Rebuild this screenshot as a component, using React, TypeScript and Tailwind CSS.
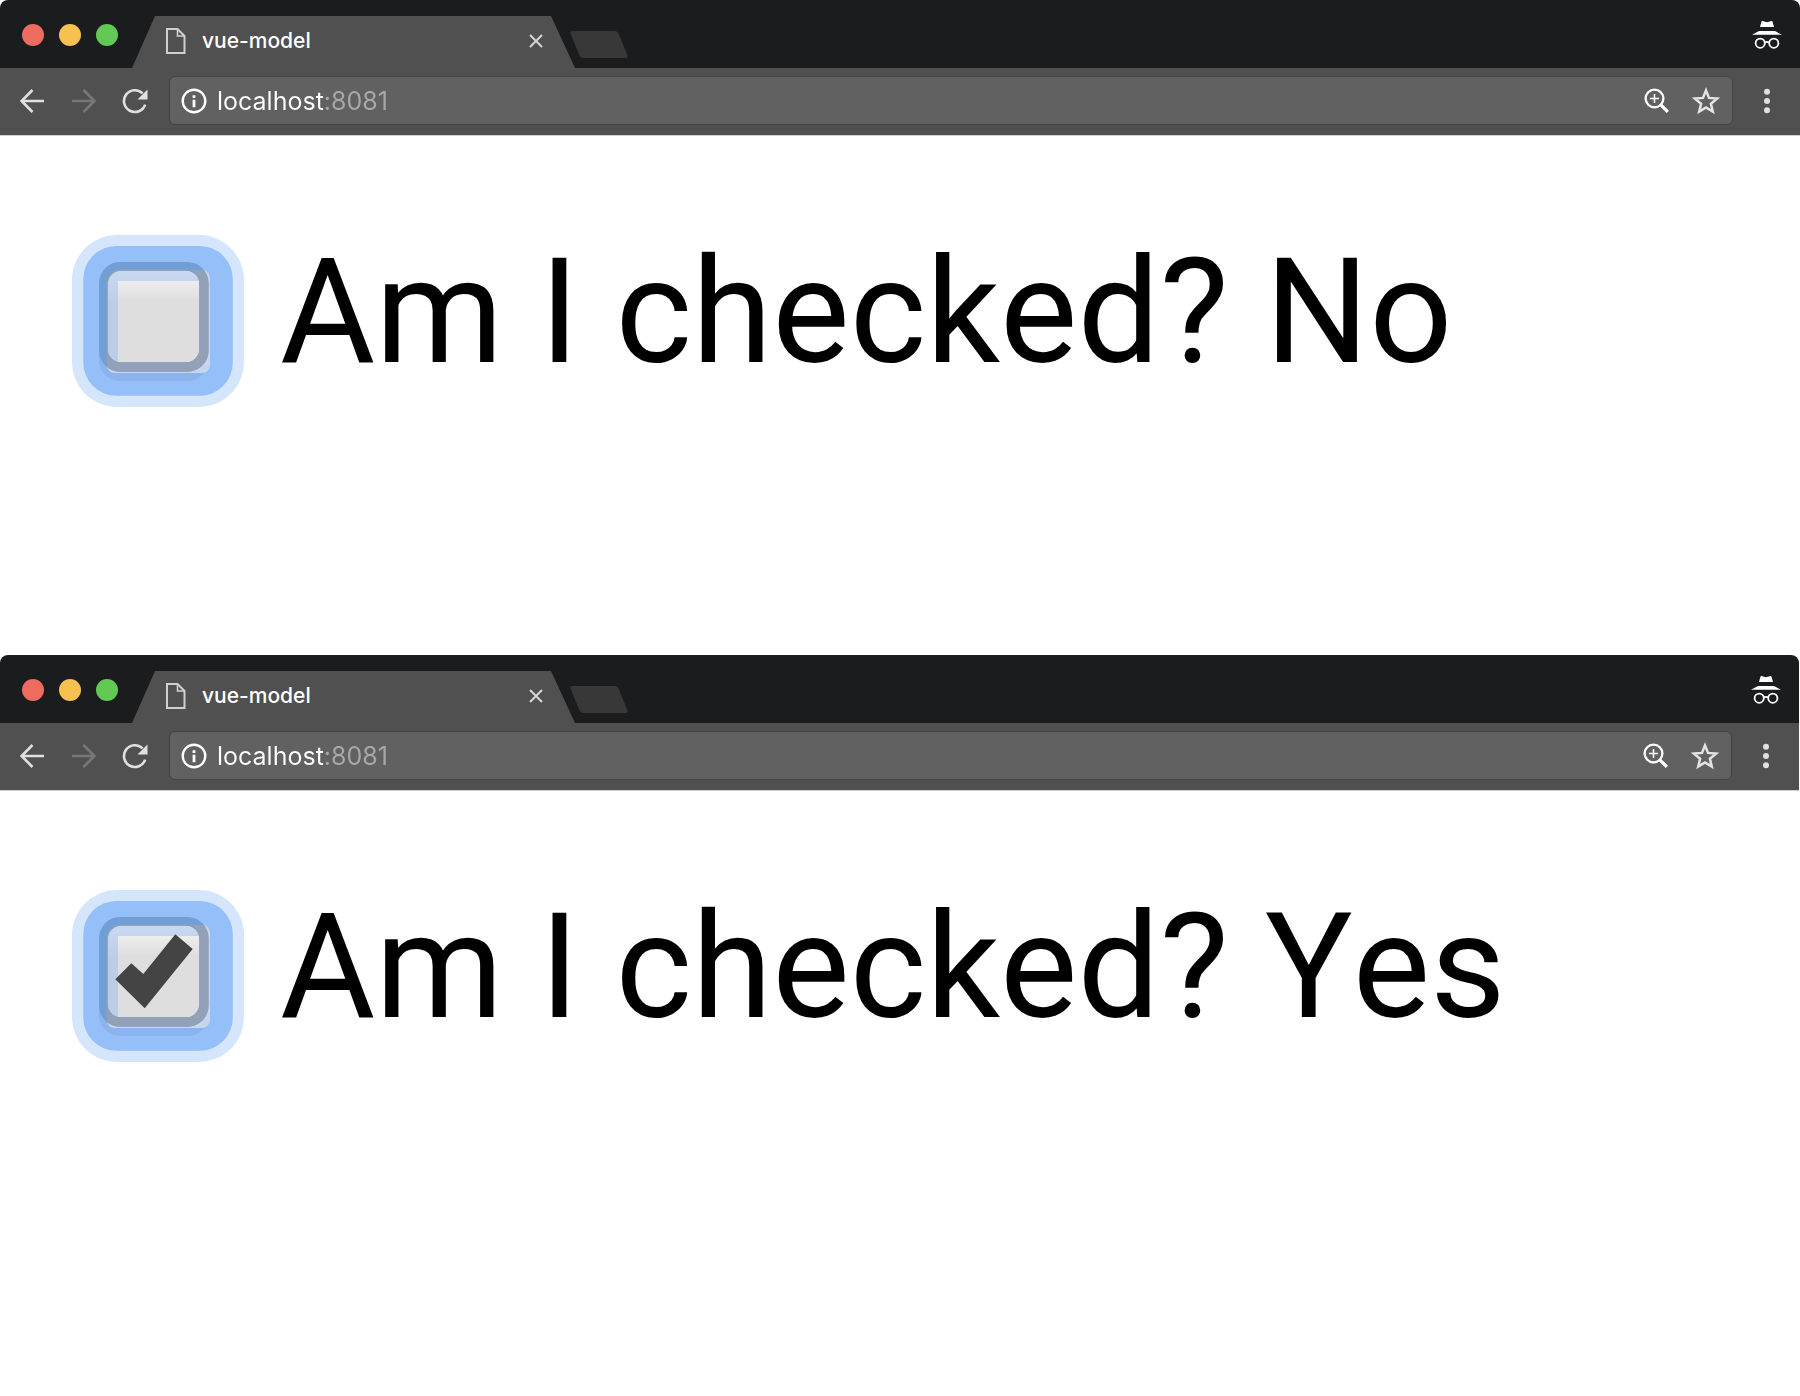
import { useId, useState } from "react";

function FileIcon() {
  return (
    <svg width="20" height="26" viewBox="0 0 20 26" fill="none" stroke="#d0d0d0" strokeWidth="2" aria-hidden="true">
      <path d="M1 1h10.5l7 7V25H1z" />
      <path d="M11.5 1v7h7" strokeWidth="1.6" />
    </svg>
  );
}

function CloseIcon() {
  return (
    <svg width="14" height="14" viewBox="0 0 14 14" stroke="#d6d6d6" strokeWidth="2" aria-hidden="true">
      <path d="M1 1l12 12M13 1L1 13" />
    </svg>
  );
}

function IncognitoIcon() {
  return (
    <svg width="30" height="28" viewBox="0 0 30 28" fill="#fff" role="img" aria-label="Incognito">
      <path d="M9.4 0.8Q9.6 0 10.4 0.1L15 1.2L19.6 0.1Q20.4 0 20.6 0.8L22 6H8z" />
      <path d="M7 10H23L30 13.8H0z" />
      <g fill="none" stroke="#fff" strokeWidth="1.8">
        <circle cx="8.2" cy="22.2" r="4.6" />
        <circle cx="21.8" cy="22.2" r="4.6" />
        <path d="M12.8 21.4Q15 20.4 17.2 21.4" />
      </g>
    </svg>
  );
}

function BackIcon() {
  return (
    <svg width="24" height="24" viewBox="0 0 24 24" fill="none" stroke="currentColor" strokeWidth="2.6" aria-hidden="true">
      <path d="M12.5 1L1.6 12L12.5 23M1.6 12H24" />
    </svg>
  );
}

function ReloadIcon() {
  return (
    <svg width="26" height="26" viewBox="0 0 26 26" fill="none" aria-hidden="true">
      <path d="M20.6 5.4A10.9 10.9 0 1 0 23.2 16.6" stroke="#e0e0e0" strokeWidth="2.6" />
      <path d="M25.5 1.5V11.5H15.5z" fill="#e0e0e0" />
    </svg>
  );
}

function InfoIcon() {
  return (
    <svg width="26" height="26" viewBox="0 0 26 26" fill="none" aria-hidden="true">
      <circle cx="13" cy="13" r="11.3" stroke="#fff" strokeWidth="2.4" />
      <path d="M11.6 7.2h2.8v2.8h-2.8zM11.6 11.8h2.8v7.4h-2.8z" fill="#fff" />
    </svg>
  );
}

function ZoomIcon() {
  return (
    <svg width="26" height="26" viewBox="0 0 26 26" fill="none" stroke="#fff" aria-hidden="true">
      <circle cx="10.5" cy="10.5" r="8.9" strokeWidth="2.3" />
      <path d="M10.5 6v9M6 10.5h9" strokeWidth="1.6" />
      <path d="M16.8 16.8l7 7" strokeWidth="3.2" />
    </svg>
  );
}

function StarIcon() {
  return (
    <svg width="28" height="28" viewBox="0 0 28 28" fill="none" stroke="#e4e4e4" strokeWidth="2.5" aria-hidden="true">
      <path d="M14 3.4L17 10.9L25 11.6L18.9 16.8L20.8 24.6L14 20.4L7.2 24.6L9.1 16.8L3 11.6L11 10.9z" />
    </svg>
  );
}

function MenuIcon() {
  return (
    <svg width="6" height="26" viewBox="0 0 6 26" fill="#e0e0e0" aria-hidden="true">
      <circle cx="3" cy="3.8" r="3" />
      <circle cx="3" cy="13" r="3" />
      <circle cx="3" cy="22.2" r="3" />
    </svg>
  );
}

function CheckboxFace({ checked }: { checked: boolean }) {
  const id = useId();
  return (
    <svg
      className="pointer-events-none absolute inset-0"
      width="172"
      height="172"
      viewBox="0 0 172 172"
      aria-hidden="true"
    >
      <defs>
        <linearGradient id={id + "gray"} x1="0" y1="0" x2="0" y2="1">
          <stop offset="0" stopColor="#ededed" />
          <stop offset="0.25" stopColor="#dedede" />
          <stop offset="1" stopColor="#dedede" />
        </linearGradient>
        <linearGradient id={id + "blue"} x1="0" y1="0" x2="0" y2="1">
          <stop offset="0" stopColor="#c9d9f1" />
          <stop offset="0.35" stopColor="#bccde6" />
          <stop offset="1" stopColor="#bccde6" />
        </linearGradient>
      </defs>
      <rect x="11.3" y="11" width="149.5" height="149.7" rx="33" fill="#95bff9" />
      <rect x="27" y="36" width="109.5" height="110" rx="21" fill="#8bb4ee" />
      <rect x="34.7" y="35" width="103.3" height="103" rx="8" fill="#c5d6ee" />
      <rect x="35.5" y="35.5" width="92" height="92" rx="13" fill={"url(#" + id + "blue)"} />
      <path d="M46 46H127.5V127.5H46z" fill={"url(#" + id + "gray)"} />
      <path
        fillRule="evenodd"
        fill="#729ed6"
        d="M48 27H115.5A21 21 0 0 1 136.5 48V115.7A21 21 0 0 1 115.5 136.7H48A21 21 0 0 1 27 115.7V48A21 21 0 0 1 48 27zM49 35.7A13.3 13.3 0 0 0 35.7 49V114A13.3 13.3 0 0 0 49 127.3H114A13.3 13.3 0 0 0 127.3 114V49A13.3 13.3 0 0 0 114 35.7z"
      />
      <path
        fill="#92a1b8"
        d="M34.7 127V132Q40.5 136.7 48 136.7H115.5A21 21 0 0 0 136.5 115.7V48Q136.5 40.5 131.5 35H114A13.3 13.3 0 0 1 127.3 49V114A13.3 13.3 0 0 1 114 127.3H49Q40 127.3 35.7 118H34.7z"
      />
      <path d="M35.2 119V49A14 14 0 0 1 49 35.2H116" fill="none" stroke="#92a1b8" strokeWidth="1.2" />
      <path d="M127.3 122.5V127.3H122.5Q126 125.5 127.3 122.5z" fill="#a7a39f" />
      {checked && <path d="M43.3 89.3L59.3 73.3L71.3 84L103.3 44.3L120.7 59L72.7 118.3z" fill="#444" />}
    </svg>
  );
}

function CheckQuestion({ initial }: { initial: boolean }) {
  const [checked, setChecked] = useState(initial);
  return (
    <label className="flex items-start gap-9">
      <span className="relative size-[172px] shrink-0">
        <input
          type="checkbox"
          checked={checked}
          onChange={(e) => setChecked(e.target.checked)}
          className="block size-full appearance-none rounded-[45px] bg-[#d5e5fc] outline-none"
        />
        <CheckboxFace checked={checked} />
      </span>
      <span className="font-['Roboto',sans-serif] text-[146px] leading-[155px] whitespace-nowrap text-black [font-kerning:none]">
        Am I checked? {checked ? "Yes" : "No"}
      </span>
    </label>
  );
}

function BrowserWindow({ initial, className }: { initial: boolean; className: string }) {
  return (
    <section className={className}>
      <header className="flex h-[68px] items-end rounded-t-[8px] bg-[#1b1c1e]">
        <div className="flex w-[132px] shrink-0 gap-[15px] self-start pt-6 pl-[22px]">
          <button aria-label="Close window" className="size-[22px] rounded-full bg-[#ee6b60]" />
          <button aria-label="Minimize window" className="size-[22px] rounded-full bg-[#f6c151]" />
          <button aria-label="Zoom window" className="size-[22px] rounded-full bg-[#62c955]" />
        </div>
        <div className="flex h-[52px] w-[443px] items-center bg-[#505050] pr-8 pb-0.5 pl-[34px] [clip-path:polygon(23px_0,calc(100%-24px)_0,100%_100%,0_100%)]">
          <FileIcon />
          <span className="ml-4 flex-1 font-['Inter',sans-serif] text-[21px] leading-7 font-medium text-white">
            vue-model
          </span>
          <button aria-label="Close tab">
            <CloseIcon />
          </button>
        </div>
        <button aria-label="New tab" className="mb-[10px] h-[27px] w-12 skew-x-[22deg] rounded-[3px] bg-[#383838]" />
        <div className="ml-auto self-start pt-[21px] pr-[18px]">
          <IncognitoIcon />
        </div>
      </header>
      <nav className="flex h-[68px] items-center border-b border-[#d0d0d0] bg-[#505050] pr-[30px] pb-0.5 pl-5">
        <button aria-label="Back" className="text-[#e0e0e0]">
          <BackIcon />
        </button>
        <button aria-label="Forward" className="ml-7 rotate-180 text-[#777]">
          <BackIcon />
        </button>
        <button aria-label="Reload" className="ml-[26px]">
          <ReloadIcon />
        </button>
        <div className="mr-[31px] ml-[21px] flex h-[49px] flex-1 items-center rounded-[6px] border border-[#434343] bg-[#616161] pr-3 pl-[11px]">
          <InfoIcon />
          <input
            type="text"
            aria-label="Address"
            defaultValue="localhost:8081"
            className="ml-[10px] min-w-0 flex-1 bg-linear-to-r from-white from-[106px] to-[#a8a8a8] to-[106px] bg-clip-text font-['Inter',sans-serif] text-[25px] leading-8 text-transparent outline-none"
          />
          <button aria-label="Page zoom">
            <ZoomIcon />
          </button>
          <button aria-label="Bookmark" className="ml-[22px]">
            <StarIcon />
          </button>
        </div>
        <button aria-label="Menu">
          <MenuIcon />
        </button>
      </nav>
      <main className="px-[72px] pt-[99px]">
        <CheckQuestion initial={initial} />
      </main>
    </section>
  );
}

export default function App() {
  return (
    <div className="min-h-screen bg-white">
      <BrowserWindow initial={false} className="pb-[248px]" />
      <BrowserWindow initial={true} className="mr-px" />
    </div>
  );
}
